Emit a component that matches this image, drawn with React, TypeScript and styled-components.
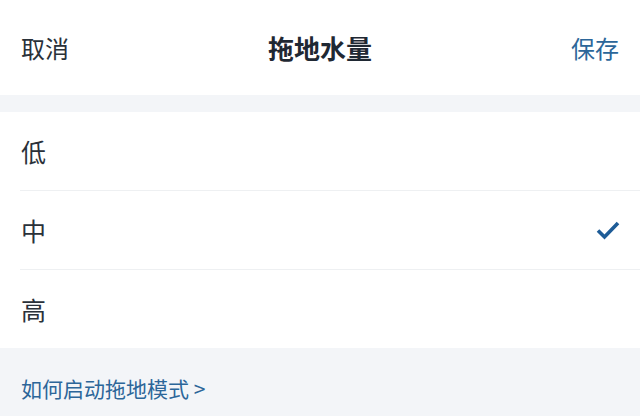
import React from 'react';
import styled, { createGlobalStyle } from 'styled-components';

const GlobalStyle = createGlobalStyle`
  html, body {
    margin: 0;
    padding: 0;
    background: #f3f5f8;
    font-family: "Noto Sans CJK SC", "Noto Sans", sans-serif;
  }
`;

const Page = styled.div`
  width: 640px;
  height: 416px;
  overflow: hidden;
  background: #f3f5f8;
`;

const Header = styled.div`
  height: 95px;
  background: #fff;
  display: flex;
  align-items: center;
  justify-content: space-between;
  padding: 0 21px 0 21px;
  box-sizing: border-box;
`;

const NavButton = styled.span<{ $primary?: boolean }>`
  font-size: 24px;
  color: ${(p) => (p.$primary ? '#2c6699' : '#2a3139')};
  width: 70px;
  text-align: ${(p) => (p.$primary ? 'right' : 'left')};
`;

const Title = styled.h1`
  margin: 0;
  font-size: 26px;
  font-weight: 700;
  color: #1f2833;
`;

const List = styled.div`
  margin-top: 17px;
  background: #fff;
`;

const Row = styled.div<{ $last?: boolean }>`
  height: 78px;
  margin-left: 20px;
  padding-right: 20px;
  display: flex;
  align-items: center;
  justify-content: space-between;
  border-bottom: ${(p) => (p.$last ? 'none' : '1px solid #eef0f2')};
`;

const Label = styled.span`
  font-size: 25px;
  color: #2a3139;
  margin-left: 1px;
`;

const Footer = styled.div`
  padding: 25px 21px 0 21px;
`;

const HelpLink = styled.a`
  font-size: 21px;
  color: #2c6699;
  text-decoration: none;
`;

const Check = () => (
  <svg width="24" height="20" viewBox="0 0 24 20">
    <path d="M2 10.5 L8.5 17 L22 3" fill="none" stroke="#1e5c97" strokeWidth="3.6" strokeLinecap="butt" />
  </svg>
);

const levels = ['低', '中', '高'];
const selected = '中';

const App: React.FC = () => (
  <Page>
    <GlobalStyle />
    <Header>
      <NavButton>取消</NavButton>
      <Title>拖地水量</Title>
      <NavButton $primary>保存</NavButton>
    </Header>
    <List>
      {levels.map((l, i) => (
        <Row key={l} $last={i === levels.length - 1}>
          <Label>{l}</Label>
          {l === selected && <Check />}
        </Row>
      ))}
    </List>
    <Footer>
      <HelpLink href="#">如何启动拖地模式 &gt;</HelpLink>
    </Footer>
  </Page>
);

export default App;
